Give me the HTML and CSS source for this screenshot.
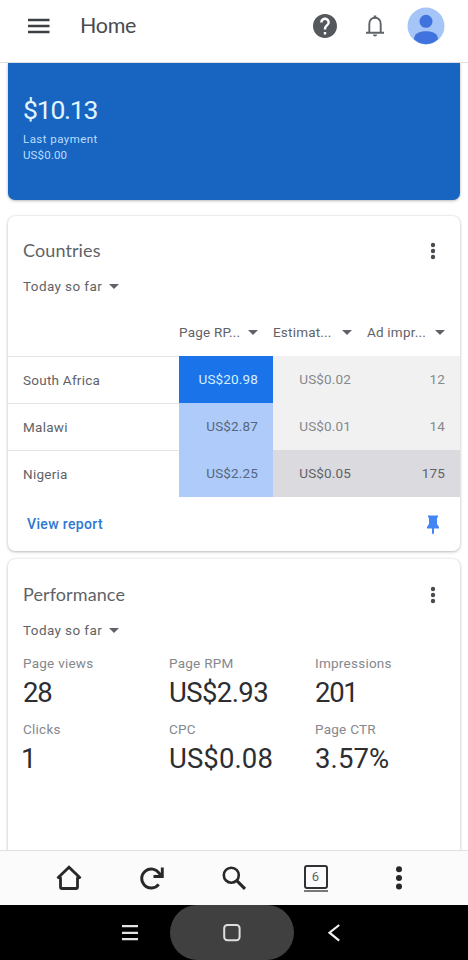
FILE: index.html
```html
<!DOCTYPE html>
<html lang="en">
<head>
<meta charset="utf-8">
<title>Home</title>
<link rel="stylesheet" href="styles.css">
</head>
<body>
<header class="topbar">
  <svg class="menu" viewBox="0 0 22 16"><path d="M0 2h21.500M0 8h21.500M0 14h21.500" stroke="#3c4043" stroke-width="2.300"/></svg>
  <h1 class="title">Home</h1>
  <svg class="help" viewBox="2 2 20 20"><path fill="#55585c" d="M12 2C6.480 2 2 6.480 2 12s4.480 10 10 10 10-4.480 10-10S17.520 2 12 2zm1 17h-2v-2h2v2zm2.070-7.750l-.9.920C13.450 12.900 13 13.500 13 15h-2v-.5c0-1.100.450-2.100 1.170-2.830l1.240-1.260c.370-.360.590-.860.590-1.410 0-1.100-.9-2-2-2s-2 .9-2 2H8c0-2.210 1.790-4 4-4s4 1.790 4 4c0 .880-.360 1.680-.930 2.250z"/></svg>
  <svg class="bell" viewBox="0 0 20 24"><path d="M4.300 18.500V10.200C4.300 6.300 6.600 3.700 10 3.700s5.700 2.600 5.700 6.500v8.300M1 18.800h18" fill="none" stroke="#5f6368" stroke-width="1.900"/><path d="M8.700 1.500h2.600v3H8.700zM7.900 20.500h4.200a2.100 2.100 0 0 1-4.200 0z" fill="#5f6368"/></svg>
  <svg class="avatar" viewBox="0 0 38 38"><circle cx="19" cy="19" r="18.500" fill="#a5c5f8"/><circle cx="19" cy="14.300" r="6.500" fill="#4173df"/><path d="M7 32.300C7 26.700 12 24.200 19 24.200s12 2.500 12 8.100A18.500 18.500 0 0 1 19 37.300 18.500 18.500 0 0 1 7 32.300z" fill="#4173df"/></svg>
</header>
<main class="content">
  <section class="card balance">
    <div class="amount">$10.13</div>
    <div class="note label">Last payment</div>
    <div class="note">US$0.00</div>
  </section>

  <section class="card countries">
    <div class="card-head">
      <h2>Countries</h2>
      <svg class="dots" viewBox="0 0 6 18"><g fill="#494c50"><circle cx="3" cy="3" r="2.200"/><circle cx="3" cy="9" r="2.200"/><circle cx="3" cy="15" r="2.200"/></g></svg>
    </div>
    <div class="range">Today so far <i class="caret"></i></div>
    <div class="table">
      <div class="row head">
        <span></span>
        <span class="col"><b>Page RP...</b><i class="caret"></i></span>
        <span class="col"><b>Estimat...</b><i class="caret"></i></span>
        <span class="col"><b>Ad impr...</b><i class="caret"></i></span>
      </div>
      <div class="row"><span class="name">South Africa</span><span class="num top">US$20.98</span><span class="num low est">US$0.02</span><span class="num low">12</span></div>
      <div class="row"><span class="name">Malawi</span><span class="num mid">US$2.87</span><span class="num low est">US$0.01</span><span class="num low">14</span></div>
      <div class="row"><span class="name">Nigeria</span><span class="num mid">US$2.25</span><span class="num high est">US$0.05</span><span class="num high">175</span></div>
    </div>
    <div class="card-foot">
      <a class="link">View report</a>
      <svg class="pin" viewBox="0 0 12 20"><path fill="#4285f4" d="M1 .500h10v2h-1v6.500l2 3v1.500H7V18l-1 1.700L5 18v-4.500H0V12l2-3V2.500H1z"/></svg>
    </div>
  </section>

  <section class="card performance">
    <div class="card-head">
      <h2>Performance</h2>
      <svg class="dots" viewBox="0 0 6 18"><g fill="#494c50"><circle cx="3" cy="3" r="2.200"/><circle cx="3" cy="9" r="2.200"/><circle cx="3" cy="15" r="2.200"/></g></svg>
    </div>
    <div class="range">Today so far <i class="caret"></i></div>
    <div class="metrics">
      <div><div class="m-label">Page views</div><div class="m-value tight">28</div></div>
      <div><div class="m-label">Page RPM</div><div class="m-value">US$2.93</div></div>
      <div><div class="m-label">Impressions</div><div class="m-value tight">201</div></div>
      <div><div class="m-label">Clicks</div><div class="m-value one">1</div></div>
      <div><div class="m-label">CPC</div><div class="m-value loose">US$0.08</div></div>
      <div><div class="m-label">Page CTR</div><div class="m-value loose">3.57%</div></div>
    </div>
  </section>
</main>
<nav class="toolbar">
  <svg viewBox="0 0 28 28"><path d="M5.500 13.500v9.500q0 1.500 1.500 1.500h14q1.500 0 1.500-1.500v-9.500M2.500 14.300L14 3.300l11.500 11M2.500 13.700h4M21.500 13.700h4" fill="none" stroke="#27282a" stroke-width="2.800"/></svg>
  <svg viewBox="0 0 28 28"><path d="M20.700 20.300A9.500 9.500 0 1 1 21.300 9.500L23.800 12.700M24.300 3.500v9h-8.800" fill="none" stroke="#27282a" stroke-width="2.900"/></svg>
  <svg viewBox="0 0 28 28"><circle cx="11.300" cy="11.200" r="7.500" fill="none" stroke="#27282a" stroke-width="2.600"/><path d="M16.700 16.600l8.300 8.300" stroke="#27282a" stroke-width="3.100"/></svg>
  <div class="tabs"><span>6</span></div>
  <svg viewBox="0 0 28 28"><g fill="#27282a"><circle cx="14" cy="5.200" r="3"/><circle cx="14" cy="14" r="3"/><circle cx="14" cy="22.600" r="3"/></g></svg>
</nav>
<nav class="system">
  <span></span>
  <div class="key"><svg viewBox="0 0 20 20"><path d="M2 3.200h16M2 9.800h16M2 16.200h16" stroke="#e4e4e4" stroke-width="2.200"/></svg></div>
  <div class="key pressed"><svg viewBox="0 0 20 20"><rect x="2.200" y="2" width="15.400" height="15.200" rx="3.200" fill="none" stroke="#dedede" stroke-width="2"/></svg></div>
  <div class="key"><svg viewBox="0 0 20 20"><path d="M15.200 2L5.500 9.700l9.700 8" fill="none" stroke="#f0f0f0" stroke-width="2.200"/></svg></div>
</nav>
</body>
</html>
```
FILE: styles.css
```css
* { box-sizing: border-box; }
body {
  margin: 0;
  width: 468px;
  height: 960px;
  display: flex;
  flex-direction: column;
  overflow: hidden;
  background: #fff;
  font-family: Roboto, sans-serif;
  color: #5f6368;
}
svg { display: block; flex: none; }
h1, h2 { margin: 0; font-family: Lato, sans-serif; font-weight: 400; }

.topbar {
  height: 63px;
  flex: none;
  padding: 0 23px 11px 28px;
  display: flex;
  align-items: center;
  border-bottom: 1px solid #dfe0e2;
}
.menu { width: 22px; height: 16px; }
.title { margin-left: 30px; padding-bottom: 2px; font-size: 21.5px; letter-spacing: -.3px; line-height: 28px; color: #484b4f; flex: 1; }
.help { width: 24px; height: 24px; margin-right: 28px; }
.bell { width: 20px; height: 24px; margin-right: 22px; }
.avatar { width: 38px; height: 38px; }

.content { flex: 1; min-height: 0; overflow: hidden; padding: 0 8px; }
.card {
  border-radius: 7px;
  background: #fff;
  box-shadow: 0 1px 3px rgba(60, 64, 67, .32), 0 0 2px rgba(60, 64, 67, .15);
}
.balance {
  height: 137px;
  padding: 31px 15px 0;
  border-radius: 0 0 7px 7px;
  background: #1765c1;
  color: #bcdcff;
}
.amount { font-size: 26.5px; line-height: 32px; letter-spacing: -1.2px; color: #e1f4ff; }
.note { font-size: 11.5px; line-height: 16px; letter-spacing: .15px; }
.label { margin-top: 5px; letter-spacing: .45px; }

.countries { height: 335px; margin-top: 16px; }
.card-head { display: flex; justify-content: space-between; padding: 22px 24px 0 15px; height: 58px; }
h2 { font-size: 18px; line-height: 24px; letter-spacing: .1px; }
.dots { width: 6px; height: 18px; margin-top: 4px; }
.range { display: flex; align-items: center; gap: 7px; padding-left: 15px; font-size: 13.5px; line-height: 24px; letter-spacing: .4px; }
.caret { flex: none; border: 5px solid transparent; border-top: 5px solid #5f6368; border-bottom: 0; }

.table { margin-top: 10px; }
.row { display: grid; grid-template-columns: 171px 94px 94px 93px; height: 47px; }
.row > * { min-width: 0; }
.row.head { height: 48px; }
.col { display: flex; align-items: center; justify-content: space-between; padding-right: 15px; font-size: 13.5px; letter-spacing: .2px; }
.col b { font-weight: 400; white-space: nowrap; }
.name { padding-left: 15px; border-top: 1px solid #e3e4e6; font-size: 13.5px; line-height: 46px; letter-spacing: .25px; }
.num { padding-right: 15px; text-align: right; font-size: 13.5px; line-height: 46px; letter-spacing: .15px; }
.est { padding-right: 16px; }
.top { background: #1a73e8; color: #d5efff; }
.mid { background: #aecbfa; color: #56667e; }
.low { background: #f1f1f2; color: #85888c; }
.high { background: #dadadf; color: #5f6368; }
.card-foot { display: flex; justify-content: space-between; padding: 15px 21px 0 19px; }
.link { font-size: 14px; font-weight: 500; line-height: 24px; letter-spacing: .35px; color: #2d78ce; }
.pin { width: 12px; height: 20px; margin-top: 3px; }

.performance { height: 420px; margin-top: 8px; }
.performance .card-head { height: 59px; padding-top: 23px; }
.metrics { display: grid; grid-template-columns: 146px 146px 1fr; grid-auto-rows: 66px; padding: 11px 0 0 15px; }
.m-label { font-size: 13.5px; line-height: 20px; letter-spacing: .25px; color: #85888c; }
.m-value { font-size: 27.5px; line-height: 40px; letter-spacing: -.6px; color: #2c2e31; }
.tight { letter-spacing: -1.3px; }
.loose { letter-spacing: .1px; }
.one { text-indent: -2px; }

.toolbar {
  height: 55px;
  flex: none;
  padding: 0 55px;
  display: flex;
  align-items: center;
  justify-content: space-between;
  border-top: 1px solid #e1e1e2;
  background: #fbfbfb;
}
.toolbar svg { width: 28px; height: 28px; }
.tabs { width: 24px; height: 27px; margin: 0 3px 0 1px; border-bottom: 2px solid #77787a; }
.tabs span {
  display: block;
  height: 24px;
  border: 2.5px solid #303134;
  border-radius: 3px;
  text-align: center;
  font-size: 13px;
  line-height: 20px;
}
.system { height: 55px; flex: none; display: grid; grid-template-columns: 90px 80px 124px 80px; background: #000; }
.key { display: flex; align-items: center; justify-content: center; }
.key svg { width: 20px; height: 20px; }
.pressed { border-radius: 28px; background: #404040; }
```
